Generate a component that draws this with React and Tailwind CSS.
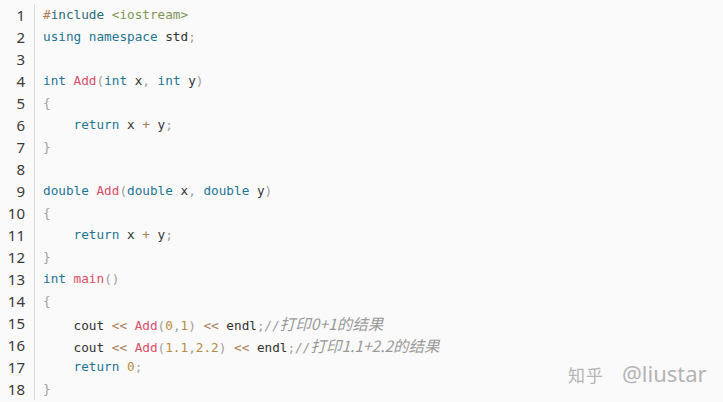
import React from 'react';

const K = 'text-[#1f7591]';
const F = 'text-[#d9506a]';
const P = 'text-[#a0a0a0]';
const S = 'text-[#7e9656]';
const O = 'text-[#a8805a]';
const N = 'text-[#b78c45]';
const C = 'text-[#9a9a9a] italic';
const CZ = "text-[#9a9a9a] italic text-[15.5px] font-['Noto_Sans_CJK_SC',sans-serif]";

// each line is a list of [className, text]
const lines = [
    [[O, '#'], ['text-[#2c6b7c]', 'include'], ['', ' '], [S, '<iostream>']],
    [[K, 'using'], ['', ' '], [K, 'namespace'], ['', ' std'], [P, ';']],
    [],
    [[K, 'int'], ['', ' '], [F, 'Add'], [P, '('], [K, 'int'], ['', ' x'], [P, ','], ['', ' '], [K, 'int'], ['', ' y'], [P, ')']],
    [[P, '{']],
    [['', '    '], [K, 'return'], ['', ' x '], [O, '+'], ['', ' y'], [P, ';']],
    [[P, '}']],
    [],
    [[K, 'double'], ['', ' '], [F, 'Add'], [P, '('], [K, 'double'], ['', ' x'], [P, ','], ['', ' '], [K, 'double'], ['', ' y'], [P, ')']],
    [[P, '{']],
    [['', '    '], [K, 'return'], ['', ' x '], [O, '+'], ['', ' y'], [P, ';']],
    [[P, '}']],
    [[K, 'int'], ['', ' '], [F, 'main'], [P, '()']],
    [[P, '{']],
    [['', '    cout '], [O, '<<'], ['', ' '], [F, 'Add'], [P, '('], [N, '0'], [P, ','], [N, '1'], [P, ')'], ['', ' '], [O, '<<'], ['', ' endl'], [P, ';'], [C, '//'], [CZ, '打印0+1的结果']],
    [['', '    cout '], [O, '<<'], ['', ' '], [F, 'Add'], [P, '('], [N, '1.1'], [P, ','], [N, '2.2'], [P, ')'], ['', ' '], [O, '<<'], ['', ' endl'], [P, ';'], [C, '//'], [CZ, '打印1.1+2.2的结果']],
    [['', '    '], [K, 'return'], ['', ' '], [N, '0'], [P, ';']],
    [[P, '}']],
];

const App = () => {
    return (
        <div className="relative w-[723px] h-[402px] bg-[#fafafa] overflow-hidden">
            <div className="flex pt-[4px]">
                {/* gutter */}
                <div className="w-[35px] border-r border-[#dcdcdc] pr-[9px] text-right text-[15px] leading-[22px] text-[#3a3a3a] font-['Noto_Sans',sans-serif]">
                    {lines.map((_, i) => (
                        <div key={i} className="h-[22px]">{i + 1}</div>
                    ))}
                </div>
                {/* code */}
                <div className="pl-[8px] text-[12.7px] leading-[22px] text-[#333] font-['DejaVu_Sans_Mono','Noto_Sans_CJK_SC',monospace] whitespace-pre">
                    {lines.map((line, i) => (
                        <div key={i} className="h-[22px]">
                            {line.map(([cls, t], j) => (
                                <span key={j} className={cls}>{t}</span>
                            ))}
                        </div>
                    ))}
                </div>
            </div>
            <div className="absolute left-[568px] top-[357px] flex items-baseline gap-[18px] text-[#b4b4b4] font-['Noto_Sans','Noto_Sans_CJK_SC',sans-serif]">
                <span className="text-[17px] tracking-[1px]">知乎</span>
                <span className="text-[22px]">@liustar</span>
            </div>
        </div>
    );
};

export default App;
